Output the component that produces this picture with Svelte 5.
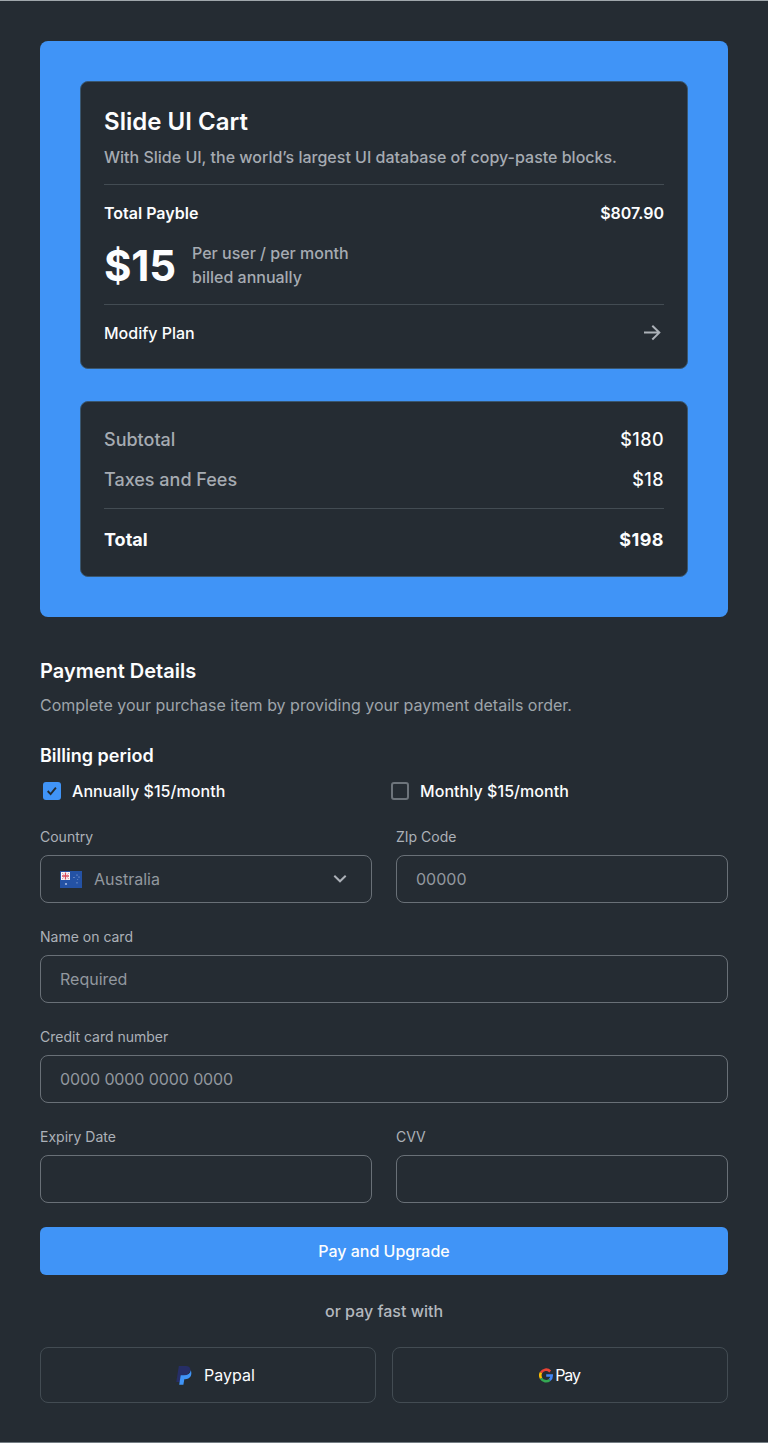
<script>
  let billing = $state('annual');
  const plans = [
    { id: 'annual', label: 'Annually $15/month' },
    { id: 'monthly', label: 'Monthly $15/month' }
  ];
  const fees = [
    { label: 'Subtotal', amount: '$180' },
    { label: 'Taxes and Fees', amount: '$18' }
  ];
</script>

<main class="page">
  <section class="summary">
    <article class="card">
      <h1>Slide UI Cart</h1>
      <p class="intro">With Slide UI, the world’s largest UI database of copy-paste blocks.</p>
      <div class="plan">
        <div class="row strong"><span>Total Payble</span><span>$807.90</span></div>
        <div class="price">
          <strong>$15</strong>
          <p>Per user / per month<br />billed annually</p>
        </div>
      </div>
      <a class="row modify" href="#plan">
        <span>Modify Plan</span>
        <svg width="24" height="24" viewBox="0 0 24 24" fill="none" stroke="#acb1b8" stroke-width="2">
          <path d="M4 11.600h15M12.300 4.700l7 6.900-7 6.900" />
        </svg>
      </a>
    </article>

    <article class="card totals">
      {#each fees as fee}
        <div class="row fee"><span>{fee.label}</span><span class="amount">{fee.amount}</span></div>
      {/each}
      <div class="row total"><span>Total</span><span class="sum">$198</span></div>
    </article>
  </section>

  <section class="details">
    <h2>Payment Details</h2>
    <p class="lead">Complete your purchase item by providing your payment details order.</p>

    <h3>Billing period</h3>
    <div class="periods">
      {#each plans as plan}
        <button class="period" type="button" onclick={() => (billing = plan.id)}>
          <span class="box" class:checked={billing === plan.id}>
            {#if billing === plan.id}
              <svg width="18" height="18" viewBox="0 0 18 18" fill="none" stroke="#232b31" stroke-width="1.9">
                <path d="M4.700 9l2.900 3.100 5.300-6.500" />
              </svg>
            {/if}
          </span>
          <span>{plan.label}</span>
        </button>
      {/each}
    </div>

    <form class="fields">
      <div class="field">
        <span class="label">Country</span>
        <div class="input select">
          <svg class="flag" width="22" height="17" viewBox="0 0 22 17">
            <path fill="#2452a5" d="M0 0h22v17H0z" />
            <path fill="#f5f6fa" d="M1 1h9v8H1z" />
            <path stroke="#d8495b" stroke-width="1.300" d="M2 5h7M5.500 1.500v7" />
            <path stroke="#d98d9c" stroke-width=".9" d="M2 2l1.800 1.500M9 2L7.200 3.500M2 8l1.800-1.500M9 8L7.200 6.500" />
            <g fill="#a5b8e0">
              <circle cx="6" cy="13" r="1.100" />
              <circle cx="17" cy="4" r=".6" />
              <circle cx="14" cy="6.500" r=".6" />
              <circle cx="19" cy="6" r=".6" />
              <circle cx="17" cy="11.800" r=".6" />
              <circle cx="17.800" cy="8.500" r=".4" />
            </g>
          </svg>
          <span class="country">Australia</span>
          <svg width="24" height="24" viewBox="0 0 24 24" fill="none" stroke="#acb1b8" stroke-width="2">
            <path d="M6.300 8.800l5.700 5.500 5.700-5.500" />
          </svg>
        </div>
      </div>
      <div class="field"><span class="label">ZIp Code</span><div class="input">00000</div></div>
      <div class="field wide"><span class="label">Name on card</span><div class="input">Required</div></div>
      <div class="field wide"><span class="label">Credit card number</span><div class="input number">0000 0000 0000 0000</div></div>
      <div class="field"><span class="label">Expiry Date</span><div class="input"></div></div>
      <div class="field"><span class="label">CVV</span><div class="input"></div></div>
      <button class="pay wide" type="button">Pay and Upgrade</button>
    </form>

    <p class="or">or pay fast with</p>
    <div class="wallets">
      <button class="wallet paypal" type="button">
        <svg width="16" height="19" viewBox="0 0 16 19">
          <path fill="#262e66" d="M2.800 0h7c3.200 0 4.900 1.800 4.700 4.500L9 11.500 3.800 16H.300z" />
          <path fill="#3f94f7" d="M14.800 4.300c1.800 4.900-1 8.900-5.600 8.900h-.9l-.9 5.600H3.200L4.700 9.300H8c3.900 0 6.200-1.600 6.800-5z" />
        </svg>
        <span>Paypal</span>
      </button>
      <button class="wallet gpay" type="button">
        <svg width="14" height="15" viewBox="0 0 14 15" fill="none" stroke-width="2.600">
          <path stroke="#ea4335" d="M2 4.700A5.700 5.700 0 0 1 11.200 3.500" />
          <path stroke="#fbbc04" d="M2.100 10.300A5.700 5.700 0 0 1 2 4.700" />
          <path stroke="#34a853" d="M10.700 11.900A5.700 5.700 0 0 1 2.100 10.300" />
          <path stroke="#4285f4" d="M7.200 7.500h5.500c0 1.900-.6 3.400-2 4.400" />
        </svg>
        <span>Pay</span>
      </button>
    </div>
  </section>
</main>

<style>
  :global(body) { margin: 0; background: #252c33; }
  .page, .page :global(*) { box-sizing: border-box; }
  .page {
    height: 1443px;
    padding: 40px 40px 0;
    border-top: 1px solid #a0a7ac;
    border-bottom: 1px solid #747d83;
    background: #252c33;
    color: #fcfdfe;
    font: 500 16px/24px Inter, sans-serif;
  }
  h1, h2, h3, p { margin: 0; }
  button { padding: 0; border: 0; background: none; color: inherit; font: inherit; }
  svg { display: block; flex: none; }
  .summary { display: grid; gap: 32px; padding: 40px; border-radius: 8px; background: #4094f7; }
  .card { padding: 23px; border: 1px solid #39566f; border-radius: 8px; background: #252c33; }
  h1 { font-size: 24px; line-height: 34px; font-weight: 600; letter-spacing: 0.03px; }
  .intro { margin-top: 6px; color: #a6abb2; }
  .plan { display: grid; gap: 16px; margin: 15px 0 16px; padding: 16px 0 15px; border: solid #434c53; border-width: 1px 0; }
  .row { display: flex; justify-content: space-between; align-items: center; }
  .strong { font-weight: 600; }
  .price { display: flex; align-items: center; }
  .price strong { width: 88px; padding-top: 2px; font-size: 42px; line-height: 46px; font-weight: 700; letter-spacing: -0.2px; }
  .price p { color: #a6abb2; }
  .modify { color: inherit; text-decoration: none; }
  .totals { padding: 24px 23px 22px; font-size: 18px; line-height: 28px; }
  .fee { margin-bottom: 12px; color: #a6abb2; }
  .amount { color: #fcfdfe; letter-spacing: 0.45px; }
  .total { padding-top: 17px; border-top: 1px solid #434c53; font-weight: 700; }
  .fee + .total { margin-top: 14px; }
  .sum { letter-spacing: 0.45px; }
  .details { padding-top: 40px; }
  h2 { font-size: 20px; line-height: 28px; font-weight: 600; }
  .lead { margin-top: 8px; color: #9ea4aa; font-weight: 400; }
  h3 { margin-top: 25px; font-size: 18px; line-height: 28px; font-weight: 600; }
  .periods { display: grid; grid-template-columns: 348px 1fr; margin-top: 9px; }
  .period { display: flex; align-items: center; gap: 11px; padding-left: 3px; letter-spacing: 0.06px; }
  .box { width: 18px; height: 18px; border: 2px solid #6d747b; border-radius: 3px; }
  .checked { border: 0; background: #4094f7; }
  .fields { display: grid; grid-template-columns: 1fr 1fr; gap: 24px; margin-top: 24px; }
  .wide { grid-column: 1 / -1; }
  .field { display: grid; gap: 8px; }
  .label { color: #acb1b8; font-size: 14px; line-height: 20px; font-weight: 400; }
  .input { display: flex; align-items: center; height: 48px; padding: 0 19px; border: 1px solid #697077; border-radius: 8px; color: #92989f; font-weight: 400; }
  .number { letter-spacing: -0.1px; }
  .country { flex: 1; margin-left: 12px; }
  .pay { height: 48px; border-radius: 6px; background: #4094f7; }
  .or { margin-top: 24px; color: #b3b8be; text-align: center; }
  .wallets { display: grid; grid-template-columns: 1fr 1fr; gap: 16px; margin-top: 24px; }
  .wallet { display: flex; justify-content: center; align-items: center; gap: 12px; height: 56px; border: 1px solid #434c53; border-radius: 8px; font-weight: 400; }
  .paypal { padding-left: 15px; }
  .gpay { gap: 2px; padding-right: 1px; letter-spacing: -1.2px; }
</style>
